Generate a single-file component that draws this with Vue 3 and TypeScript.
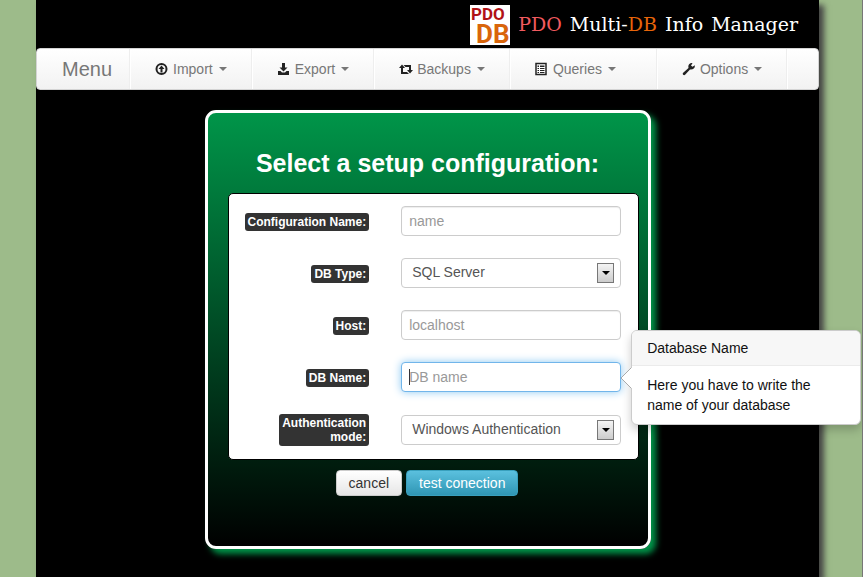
<script setup lang="ts">
import { reactive, ref } from 'vue'

interface MenuItem {
  id: string
  label: string
  wide?: boolean
}

interface Field {
  id: string
  label: string
  placeholder?: string
  options?: string[]
  help?: { title: string; text: string }
}

const menu: MenuItem[] = [
  { id: 'import', label: 'Import' },
  { id: 'export', label: 'Export' },
  { id: 'backups', label: 'Backups' },
  { id: 'queries', label: 'Queries', wide: true },
  { id: 'options', label: 'Options' },
]

const fields: Field[] = [
  { id: 'config', label: 'Configuration Name:', placeholder: 'name' },
  { id: 'type', label: 'DB Type:', options: ['SQL Server'] },
  { id: 'host', label: 'Host:', placeholder: 'localhost' },
  {
    id: 'dbname',
    label: 'DB Name:',
    placeholder: 'DB name',
    help: { title: 'Database Name', text: 'Here you have to write the name of your database' },
  },
  { id: 'auth', label: 'Authentication mode:', options: ['Windows Authentication'] },
]

const values = reactive<Record<string, string>>({
  config: '',
  type: 'SQL Server',
  host: '',
  dbname: '',
  auth: 'Windows Authentication',
})
const active = ref('dbname')
</script>

<template>
  <div class="page">
    <div class="shell">
      <header class="banner">
        <svg class="logo" viewBox="0 0 40 40" aria-hidden="true">
          <rect width="40" height="40" fill="#fff" />
          <text class="logo-small" x="1" y="15">PDO</text>
          <text class="logo-large" x="6" y="38">DB</text>
        </svg>
        <h1 class="title"><span class="red">PDO</span> <span>Multi-<span class="orange">DB</span></span> <span>Info</span> <span>Manager</span></h1>
      </header>

      <nav class="navbar">
        <a class="brand" href="#">Menu</a>
        <a v-for="item in menu" :key="item.id" href="#" class="item" :class="{ wide: item.wide }">
          <svg class="icon" viewBox="0 0 14 14" aria-hidden="true">
            <template v-if="item.id === 'import'">
              <circle cx="6.500" cy="7" r="5" fill="none" stroke="#222" stroke-width="2" />
              <path d="M6.500 3.500 9.500 7h-2v3.500h-2V7h-2z" fill="#222" />
            </template>
            <path v-else-if="item.id === 'export'" d="M5 1h3v4.500h2.500l-4 4-4-4H5zM1 9h2.500L5 10.500h3L9.500 9H12v4H1z" fill="#222" />
            <path v-else-if="item.id === 'backups'" d="M3 2.500 6 6H4v4h4l2 2H2V6H0zM4.500 3h7.500v5h2l-3 3.500L8 8h2V5H6.500z" fill="#222" />
            <template v-else-if="item.id === 'queries'">
              <rect x="1" y="1.500" width="10" height="11" fill="#fff" stroke="#222" stroke-width="1.500" />
              <path d="M2.500 3.500H4V5H2.500zM5 3.500h4.500V5H5zM2.500 6H4v1H2.500zM5 6h4.500v1H5zM2.500 8H4v1H2.500zM5 8h4.500v1H5zM2.500 10H4v1H2.500zM5 10h4.500v1H5z" fill="#222" />
            </template>
            <path v-else d="M12.800 3.200 10.500 4.800 9 3.500l1.500-2.300C8.500.7 6.400 2 6.300 4.500L6.500 6 1.200 10.800c-1.400 1.300.6 3.300 1.900 2L8 7.500c3 .5 5.300-1.300 4.800-4.300z" fill="#222" />
          </svg>
          <span>{{ item.label }}</span>
          <i class="caret"></i>
        </a>
      </nav>

      <main class="card">
        <h2 class="heading">Select a setup configuration:</h2>
        <form @submit.prevent>
          <div class="panel">
            <div v-for="field in fields" :key="field.id" class="row">
              <div class="label-cell">
                <label class="badge" :for="field.id">{{ field.label }}</label>
              </div>
              <div class="control">
                <template v-if="field.options">
                  <select :id="field.id" v-model="values[field.id]" class="input select">
                    <option v-for="option in field.options" :key="option">{{ option }}</option>
                  </select>
                  <span class="arrow"></span>
                </template>
                <input
                  v-else
                  :id="field.id"
                  v-model="values[field.id]"
                  class="input"
                  :class="{ focused: active === field.id }"
                  type="text"
                  :placeholder="field.placeholder"
                  @focus="active = field.id"
                />
                <aside v-if="field.help && active === field.id" class="popover">
                  <svg class="pointer" viewBox="0 0 11 22" aria-hidden="true">
                    <path d="M11 0 0 11l11 11z" fill="#fff" />
                    <path d="M10.500.5 0 11l10.500 10.500" fill="none" stroke="#aaa" />
                  </svg>
                  <h3 class="popover-title">{{ field.help.title }}</h3>
                  <p class="popover-text">{{ field.help.text }}</p>
                </aside>
              </div>
            </div>
          </div>
          <div class="actions">
            <button type="button" class="btn">cancel</button>
            <button type="submit" class="btn info">test conection</button>
          </div>
        </form>
      </main>
    </div>
  </div>
</template>

<style>
body {
  margin: 0;
  background: #9dbb8a;
}
</style>

<style scoped>
.page {
  display: flex;
  min-height: 100vh;
  box-sizing: border-box;
  padding: 0 43px 0 36px;
  border-right: 1px solid #777;
  overflow: hidden;
  font: 14px/20px "Liberation Sans", Arial, sans-serif;
}
.shell {
  flex: 1;
  min-width: 0;
  padding-bottom: 28px;
  box-sizing: border-box;
  background: #000;
  box-shadow: 5px 5px 6px #444;
}
.banner {
  display: flex;
  justify-content: flex-end;
  gap: 8px;
  padding: 5px 21px 3px 0;
}
.logo {
  width: 40px;
  height: 40px;
}
.logo-small {
  font: bold 17px Roboto, sans-serif;
  fill: #b01116;
}
.logo-large {
  font: bold 26px Roboto, sans-serif;
  fill: #d9650b;
}
.title {
  display: flex;
  gap: 8px;
  margin: 0;
  color: #fff;
  font: 19px/38px "DejaVu Serif", serif;
  white-space: nowrap;
}
.red {
  color: #f25a5f;
}
.orange {
  color: #e8650a;
}
.navbar {
  display: flex;
  height: 40px;
  border: 1px solid #d4d4d4;
  border-radius: 4px;
  background: linear-gradient(#fff, #f2f2f2);
}
.brand,
.item {
  display: flex;
  align-items: center;
  border-right: 1px solid #eee;
  box-shadow: 1px 0 #fff;
  color: #777;
  text-decoration: none;
}
.brand {
  padding: 0 17px 0 25px;
  font-size: 20px;
}
.item {
  gap: 4px;
  padding: 0 24px 0 25px;
}
.item.wide {
  padding-right: 40px;
}
.icon {
  width: 14px;
  height: 14px;
}
.caret {
  margin-left: 2px;
  border: 4px solid transparent;
  border-top-color: #777;
  border-bottom: 0;
}
.card {
  width: 446px;
  box-sizing: border-box;
  margin: 20px auto 0;
  padding: 33px 9px 50px 20px;
  border: 3px solid #fff;
  border-radius: 11px;
  background: linear-gradient(#009549, #000);
  box-shadow: 5px 5px 6px #009549;
}
.heading {
  margin: 0 0 13px;
  padding-right: 11px;
  color: #fff;
  font-size: 25px;
  line-height: 34px;
  text-align: center;
}
.panel {
  display: grid;
  gap: 22px;
  padding: 12px 17px 15px 16px;
  border: 1px solid #000;
  border-radius: 5px;
  background: #fff;
}
.row {
  display: grid;
  grid-template-columns: 1fr 220px;
  gap: 32px;
  height: 30px;
  align-items: center;
}
.label-cell {
  text-align: right;
}
.badge {
  display: inline-block;
  max-width: 84px;
  padding: 2px 3px;
  border-radius: 3px;
  background: #333;
  color: #fff;
  font-size: 12px;
  font-weight: bold;
  line-height: 14px;
  vertical-align: middle;
}
.row:first-child .badge {
  max-width: none;
  white-space: nowrap;
}
.control {
  position: relative;
}
.input {
  display: block;
  width: 100%;
  height: 30px;
  box-sizing: border-box;
  padding: 4px 7px;
  border: 1px solid #ccc;
  border-radius: 4px;
  background: #fff;
  box-shadow: inset 0 1px 1px #eee;
  color: #555;
  font: inherit;
  outline: 0;
}
.input::placeholder {
  color: #999;
}
.input.focused {
  border-color: #71b5ea;
  background: linear-gradient(#333, #333) 7px 6px / 1px 16px no-repeat #fff;
  box-shadow: 0 0 8px #8cc8f2;
}
.select {
  appearance: none;
  padding: 3px 30px 5px 10px;
  box-shadow: none;
}
.arrow {
  position: absolute;
  top: 5px;
  right: 7px;
  display: grid;
  place-items: center;
  width: 15px;
  height: 18px;
  border: 1px solid #777;
  background: linear-gradient(#f4f4f4, #ccc);
  pointer-events: none;
}
.arrow::before {
  content: "";
  border: 4px solid transparent;
  border-top-color: #000;
  border-bottom: 0;
}
.popover {
  position: absolute;
  top: -32px;
  left: calc(100% + 10px);
  z-index: 2;
  width: 230px;
  box-sizing: border-box;
  border: 1px solid #ccc;
  border-radius: 6px;
  background: #fff;
  box-shadow: 0 5px 10px rgba(0, 0, 0, 0.2);
  color: #111;
}
.pointer {
  position: absolute;
  top: 36px;
  left: -11px;
  width: 11px;
  height: 22px;
}
.popover-title {
  margin: 0;
  padding: 7px 15px;
  border-bottom: 1px solid #ebebeb;
  border-radius: 5px 5px 0 0;
  background: #f7f7f7;
  font-size: 14px;
  font-weight: normal;
}
.popover-text {
  margin: 0;
  padding: 9px 15px;
}
.actions {
  display: flex;
  justify-content: center;
  gap: 4px;
  padding: 10px 12px 0 0;
}
.btn {
  padding: 2px 12px;
  border: 1px solid #ccc;
  border-radius: 4px;
  background: linear-gradient(#fff, #e6e6e6);
  color: #333;
  font: inherit;
}
.btn.info {
  border-color: #39a0bd;
  background: linear-gradient(#5bc0de, #2f96b4);
  color: #fff;
}
</style>
